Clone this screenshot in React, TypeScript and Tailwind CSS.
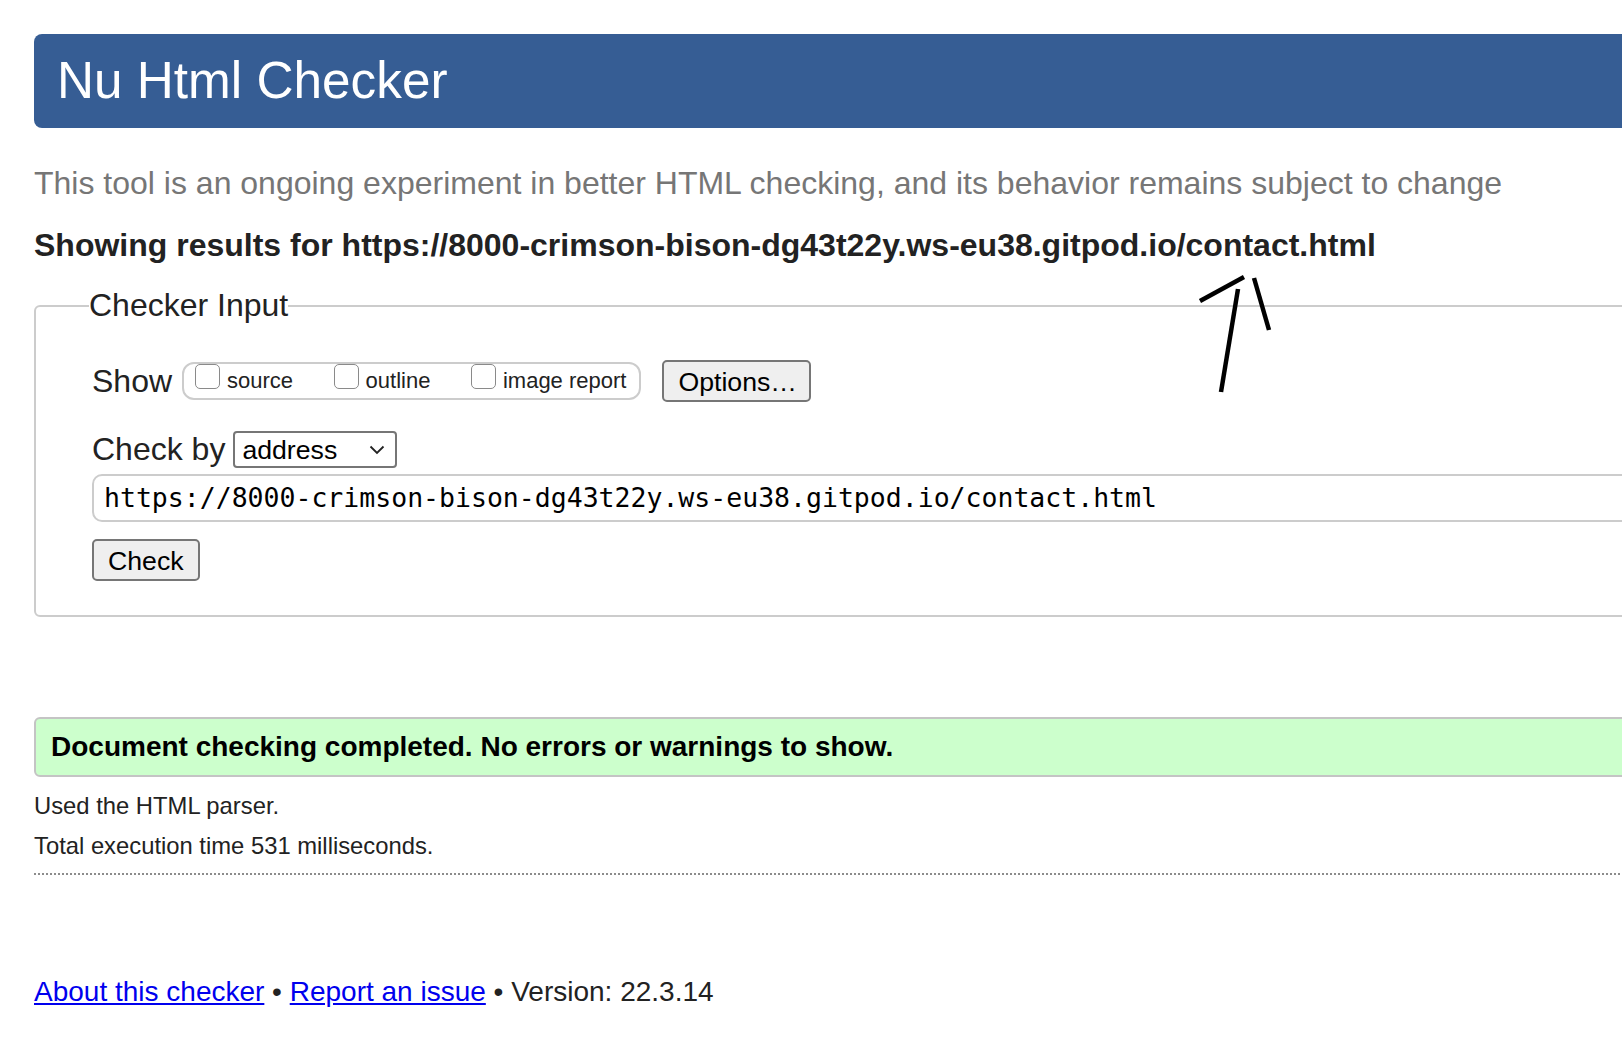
import React from 'react';

// hand drawn arrow on top of the screenshot
const ArrowMark: React.FC = () => (
  <svg className="absolute left-[1190px] top-[265px]" width="90" height="135" viewBox="0 0 90 135" fill="none">
    <path d="M10 36 L54 12" stroke="#000" strokeWidth="4.5" />
    <path d="M48 24 L31 127" stroke="#000" strokeWidth="4.5" />
    <path d="M64 13 L79 65" stroke="#000" strokeWidth="4.5" />
  </svg>
);

const Check: React.FC<{ label: string }> = ({ label }) => (
  <label className="flex items-start">
    <input type="checkbox" className="appearance-none w-[25px] h-[25px] rounded-[5px] border-[1.5px] border-[#8a8a8a] bg-white" />
    <span className="ml-[7px] mt-[4px] text-[22px] leading-[25px]">{label}</span>
  </label>
);

export default function App() {
  const url = 'https://8000-crimson-bison-dg43t22y.ws-eu38.gitpod.io/contact.html';
  return <div className="relative w-[1622px] h-[1049px] overflow-hidden bg-white text-[#222] font-['Liberation_Sans',Arial,sans-serif]">
      <div className="w-[1760px] pt-[34px] pl-[34px]">
        {/* Title bar */}
        <h1 className="h-[94px] rounded-[8px] bg-[#365d94] flex items-center pl-[23px] text-white text-[51.3px] leading-none">
          Nu Html Checker
        </h1>
        <p className="mt-[37px] text-[32px] leading-[37px] text-[#767676]">
          This tool is an ongoing experiment in better HTML checking, and its behavior remains subject to change
        </p>
        <p className="mt-[25px] text-[32px] leading-[37px] font-bold">
          Showing results for {url}
        </p>

        {/* Checker input form */}
        <fieldset className="mt-[23px] border-2 border-[#cccccc] rounded-[6px]">
          <legend className="ml-[53px] px-0 text-[32px] leading-[37px]">Checker Input</legend>
          <div className="pl-[56px] pb-[34px]">
            <div className="mt-[36px] flex items-center h-[42px]">
              <span className="text-[32px] leading-[37px]">Show</span>
              <div className="ml-[10px] h-[38px] border-2 border-[#cccccc] rounded-[12px] flex items-start pl-[11px] pr-[13px] gap-[40.5px]">
                <Check label="source" />
                <Check label="outline" />
                <Check label="image report" />
              </div>
              <button className="ml-[21px] h-[42px] w-[149px] text-left pl-[14px] border-2 border-[#767676] rounded-[5px] bg-[#efefef] text-[26.67px] text-black">
                Options…
              </button>
            </div>
            <div className="mt-[29px] flex items-center h-[37px]">
              <span className="text-[32px] leading-[37px]">Check by</span>
              <div className="ml-[8px] h-[37px] w-[164px] border-2 border-[#767676] rounded-[4px] bg-white flex items-center pl-[7px] pr-[10px] justify-between">
                <span className="text-[26.67px] text-black">address</span>
                <svg width="16" height="10" viewBox="0 0 16 10" fill="none">
                  <path d="M1.5 1.5 L8 8 L14.5 1.5" stroke="#222" strokeWidth="1.8" />
                </svg>
              </div>
            </div>
            <div className="mt-[6px] h-[48px] border-2 border-[#cccccc] rounded-[10px] flex items-center pl-[10px] text-[26.5px] text-black font-['DejaVu_Sans_Mono',monospace]">
              {url}
            </div>
            <button className="mt-[17px] h-[42px] w-[108px] text-left pl-[14px] border-2 border-[#767676] rounded-[5px] bg-[#efefef] text-[26.67px] text-black">
              Check
            </button>
          </div>
        </fieldset>

        {/* Result */}
        <div className="mt-[100px] h-[60px] border-2 border-[#c4c4c4] rounded-[6px] bg-[#ccffcc] flex items-center pl-[15px] text-[28px] font-bold text-black">
          Document checking completed. No errors or warnings to show.
        </div>
        <p className="mt-[15px] text-[23.8px] leading-[27px]">Used the HTML parser.</p>
        <p className="mt-[13px] text-[23.8px] leading-[27px]">Total execution time 531 milliseconds.</p>
        <div className="mt-[14px] border-t-2 border-dotted border-[#8c8c8c]"></div>

        {/* Footer */}
        <p className="mt-[101px] text-[28px] leading-[32px]">
          <a href="#" className="text-[#0000ee] underline">About this checker</a>
          {' • '}
          <a href="#" className="text-[#0000ee] underline">Report an issue</a>
          {' • Version: 22.3.14'}
        </p>
      </div>
      <ArrowMark />
    </div>;
}
